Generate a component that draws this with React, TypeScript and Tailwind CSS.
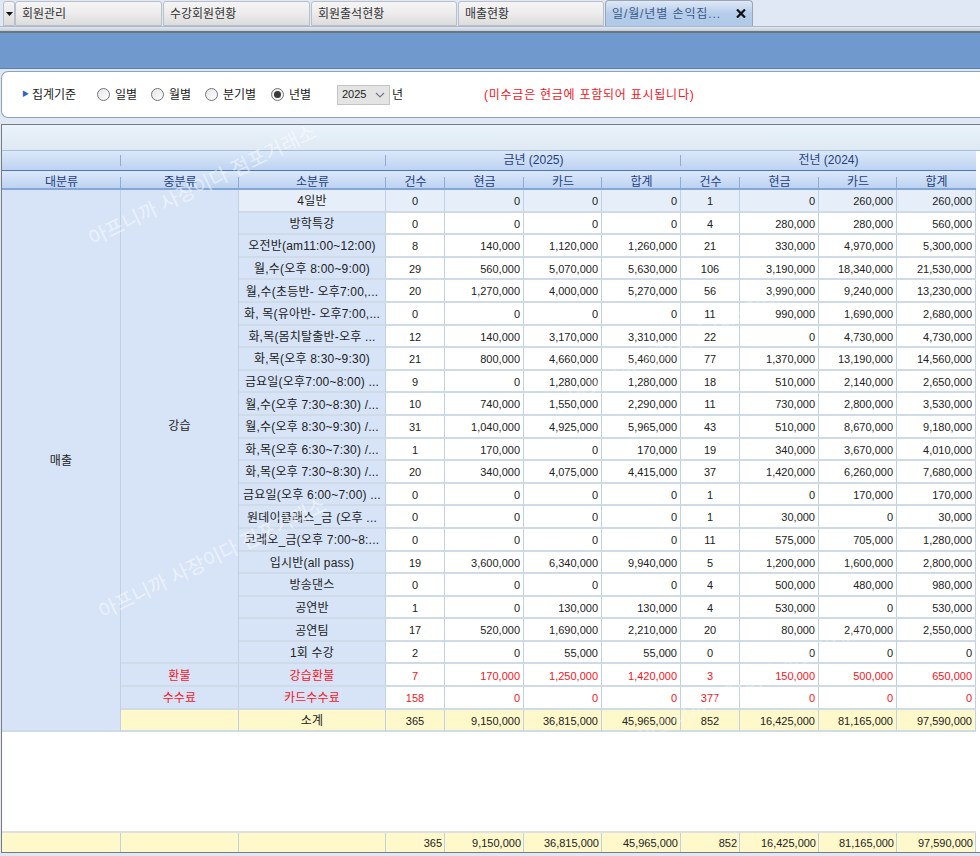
const rows: string[][] = [
  ["4일반", "0", "0", "0", "0", "1", "0", "260,000", "260,000"],
  ["방학특강", "0", "0", "0", "0", "4", "280,000", "280,000", "560,000"],
  ["오전반(am11:00~12:00)", "8", "140,000", "1,120,000", "1,260,000", "21", "330,000", "4,970,000", "5,300,000"],
  ["월,수(오후 8:00~9:00)", "29", "560,000", "5,070,000", "5,630,000", "106", "3,190,000", "18,340,000", "21,530,000"],
  ["월,수(초등반- 오후7:00,...", "20", "1,270,000", "4,000,000", "5,270,000", "56", "3,990,000", "9,240,000", "13,230,000"],
  ["화, 목(유아반- 오후7:00,...", "0", "0", "0", "0", "11", "990,000", "1,690,000", "2,680,000"],
  ["화,목(몸치탈출반-오후 ...", "12", "140,000", "3,170,000", "3,310,000", "22", "0", "4,730,000", "4,730,000"],
  ["화,목(오후 8:30~9:30)", "21", "800,000", "4,660,000", "5,460,000", "77", "1,370,000", "13,190,000", "14,560,000"],
  ["금요일(오후7:00~8:00) ...", "9", "0", "1,280,000", "1,280,000", "18", "510,000", "2,140,000", "2,650,000"],
  ["월,수(오후 7:30~8:30) /...", "10", "740,000", "1,550,000", "2,290,000", "11", "730,000", "2,800,000", "3,530,000"],
  ["월,수(오후 8:30~9:30) /...", "31", "1,040,000", "4,925,000", "5,965,000", "43", "510,000", "8,670,000", "9,180,000"],
  ["화,목(오후 6:30~7:30) /...", "1", "170,000", "0", "170,000", "19", "340,000", "3,670,000", "4,010,000"],
  ["화,목(오후 7:30~8:30) /...", "20", "340,000", "4,075,000", "4,415,000", "37", "1,420,000", "6,260,000", "7,680,000"],
  ["금요일(오후 6:00~7:00) ...", "0", "0", "0", "0", "1", "0", "170,000", "170,000"],
  ["원데이클래스_금 (오후 ...", "0", "0", "0", "0", "1", "30,000", "0", "30,000"],
  ["코레오_금(오후 7:00~8:...", "0", "0", "0", "0", "11", "575,000", "705,000", "1,280,000"],
  ["입시반(all pass)", "19", "3,600,000", "6,340,000", "9,940,000", "5", "1,200,000", "1,600,000", "2,800,000"],
  ["방송댄스", "0", "0", "0", "0", "4", "500,000", "480,000", "980,000"],
  ["공연반", "1", "0", "130,000", "130,000", "4", "530,000", "0", "530,000"],
  ["공연팀", "17", "520,000", "1,690,000", "2,210,000", "20", "80,000", "2,470,000", "2,550,000"],
  ["1회 수강", "2", "0", "55,000", "55,000", "0", "0", "0", "0"],
];
const refund = ["강습환불", "7", "170,000", "1,250,000", "1,420,000", "3", "150,000", "500,000", "650,000"];
const fee = ["카드수수료", "158", "0", "0", "0", "377", "0", "0", "0"];
const subtotal = ["소계", "365", "9,150,000", "36,815,000", "45,965,000", "852", "16,425,000", "81,165,000", "97,590,000"];

const cols = "grid grid-cols-[119px_118px_147px_59px_79px_78px_79px_59px_79px_78px_79px]";
const line = "pt-[2px] border-r border-b-2 border-r-[#bfd1e2] border-b-[#cfdce8]";

function Values({ cells, bg, text }: { cells: string[]; bg: string; text: string }) {
  return (
    <>
      {cells.slice(1).map((v, i) => (
        <div
          key={i}
          className={`${line} ${bg} ${text} flex items-center text-[11px] ${
            i === 0 || i === 4 ? "justify-center" : "justify-end pr-[3px]"
          }`}
        >
          {v}
        </div>
      ))}
    </>
  );
}

function Label({ children, className }: { children?: React.ReactNode; className: string }) {
  return (
    <div className={`${line} ${className} flex items-center justify-center whitespace-nowrap overflow-hidden tracking-[0.2px]`}>
      {children}
    </div>
  );
}

function Sep({ children, last }: { children?: React.ReactNode; last?: boolean }) {
  return (
    <div className="relative h-full flex items-center justify-center text-[#1f3f7d]">
      {children}
      {!last && <span className="absolute right-0 top-[4px] bottom-[3px] w-px bg-[#8fadd4]" />}
    </div>
  );
}

function Radio({ label, on, w }: { label: string; on?: boolean; w: string }) {
  return (
    <label className={`${w} flex items-center gap-[5px]`}>
      <span className="flex items-center justify-center w-[13px] h-[13px] rounded-full border border-[#70757a] bg-gradient-to-br from-[#e4e4e4] to-white">
        {on && <span className="w-[7px] h-[7px] rounded-full bg-[#3a3a3a]" />}
      </span>
      <span>{label}</span>
    </label>
  );
}

function Tab({ label, w }: { label: string; w: string }) {
  return (
    <div className={`${w} h-[25px] flex items-center pl-[6px] mr-px rounded-t-[3px] border border-[#b9c0c9] bg-gradient-to-b from-[#f5f5f5] via-[#ececec] to-[#dcdcdc] text-[#333] whitespace-nowrap`}>
      {label}
    </div>
  );
}

function Mark({ className }: { className: string }) {
  return (
    <div className={`absolute pointer-events-none whitespace-nowrap text-[20px] text-white origin-left rotate-[-26deg] ${className}`}>
      아프니까 사장이다 점포거래소
    </div>
  );
}

export default function App() {
  return (
    <div
      className="relative w-[980px] h-[856px] overflow-hidden flex flex-col bg-[#dfe8f4] text-[12px] text-[#222]"
      style={{ fontFamily: '"Liberation Sans","Noto Sans CJK KR",sans-serif' }}
    >
      {/* tab strip */}
      <div className="flex items-start h-[27px] pl-[3px] pt-px border-b border-b-[#aeb8c4]">
        <div className="w-[12px] h-[25px] flex items-center justify-center rounded-t-[3px] border border-[#b9c0c9] bg-gradient-to-b from-[#f5f5f5] to-[#dcdcdc]">
          <svg width="7" height="4" viewBox="0 0 7 4"><path d="M0 0h7L3.5 4z" fill="#111" /></svg>
        </div>
        <Tab label="회원관리" w="w-[147px]" />
        <Tab label="수강회원현황" w="w-[147px]" />
        <Tab label="회원출석현황" w="w-[146px]" />
        <Tab label="매출현황" w="w-[146px]" />
        <div className="w-[148px] h-[26px] -mt-px flex items-center pl-[6px] pr-[5px] justify-between rounded-t-[4px] border border-b-0 border-[#9aa6b4] bg-gradient-to-b from-[#dfe9f6] via-[#b5cdeb] to-[#b0c9e8] text-[#3d5a87] whitespace-nowrap">
          <span className="tracking-[0.9px]">일/월/년별 손익집...</span>
          <svg width="10" height="9" viewBox="0 0 10 9" className="mr-[1px]">
            <path d="M1 0.5l8 8M9 0.5l-8 8" stroke="#111" strokeWidth="2.2" />
          </svg>
        </div>
      </div>
      <div className="h-[4px] bg-gradient-to-b from-[#dfe8f4] to-[#c4ccd6]" />
      <div className="h-[2px] bg-[#6d7680]" />
      {/* blue band */}
      <div className="h-[36px] bg-[#7099cd] border-b border-b-[#5f7faa]" />
      <div className="h-[2px]" />
      {/* filter panel */}
      <div className="relative h-[47px] ml-px flex items-center rounded-l-[7px] border border-r-0 border-[#8ba3bd] bg-white pl-[20px]">
        <span className="text-[#2f5fd0] text-[7px] mr-[3px]">▶</span>
        <span className="w-[47px] whitespace-nowrap">집계기준</span>
        <div className="flex items-center ml-[18px]">
          <Radio label="일별" w="w-[54px]" />
          <Radio label="월별" w="w-[54px]" />
          <Radio label="분기별" w="w-[66px]" />
          <Radio label="년별" w="w-[66px]" on />
        </div>
        <div className="w-[53px] h-[20px] flex items-center justify-between pl-[4px] pr-[4px] border border-[#c4c4c4] bg-[#e4e4e4] text-[11px]">
          <span>2025</span>
          <svg width="10" height="6" viewBox="0 0 10 6"><path d="M1 1l4 4 4-4" fill="none" stroke="#778" strokeWidth="1.2" /></svg>
        </div>
        <span className="ml-[2px]">년</span>
        <span className="ml-[81px] text-[#f5141e] whitespace-nowrap tracking-[0.75px]">(미수금은 현금에 포함되어 표시됩니다)</span>
      </div>
      <div className="h-[6px]" />
      {/* grid frame */}
      <div className="relative ml-px h-[729px] flex flex-col border-l border-t border-b border-[#777c82] bg-white">
        <div className="h-[26px] bg-gradient-to-b from-[#eaf3fc] to-[#dfe9f2] border-b border-b-[#a4c0de]" />
        {/* headers */}
        <div className="w-[974px] bg-gradient-to-b from-[#dce8f9] to-[#bdd3f2] border-b border-b-[#4b77b7]">
          <div className={`${cols} h-[19px] pb-[2px]`}>
            <Sep />
            <div className="col-span-2"><Sep /></div>
            <div className="col-span-4"><Sep>금년 (2025)</Sep></div>
            <div className="col-span-4"><Sep last>전년 (2024)</Sep></div>
          </div>
        </div>
        <div className="w-[974px] bg-gradient-to-b from-[#dce8f9] to-[#bdd3f2] border-b-2 border-b-[#84a7d8]">
          <div className={`${cols} h-[17px] pt-[2px]`}>
            {["대분류", "중분류", "소분류", "건수", "현금", "카드", "합계", "건수", "현금", "카드", "합계"].map((h, i) => (
              <Sep key={i} last={i === 10}>{h}</Sep>
            ))}
          </div>
        </div>
        {/* body */}
        <div className={`${cols} w-[974px] grid-rows-[repeat(24,22.6px)] border-r border-r-[#bfd1e2]`}>
          <Label className="row-span-24 bg-[#d7e4f7]">매출</Label>
          <Label className="row-span-21 bg-[#d7e4f7] pb-[2px]">강습</Label>
          {rows.map((cells, i) => (
            <div key={i} className="contents">
              <Label className={i === 0 ? "bg-[#e6eff9]" : "bg-[#d7e4f7]"}>{cells[0]}</Label>
              <Values cells={cells} bg={i === 0 ? "bg-[#e6eff9]" : "bg-white"} text="text-[#222]" />
            </div>
          ))}
          <Label className="bg-[#d7e4f7] text-[#f5141e]">환불</Label>
          <Label className="bg-[#d7e4f7] text-[#f5141e]">{refund[0]}</Label>
          <Values cells={refund} bg="bg-white" text="text-[#f5141e]" />
          <Label className="bg-[#d7e4f7] text-[#f5141e]">수수료</Label>
          <Label className="bg-[#d7e4f7] text-[#f5141e]">{fee[0]}</Label>
          <Values cells={fee} bg="bg-white" text="text-[#f5141e]" />
          <Label className="bg-[#fef8ca]" />
          <Label className="bg-[#fef8ca]">{subtotal[0]}</Label>
          <Values cells={subtotal} bg="bg-[#fef8ca]" text="text-[#222]" />
        </div>
        <div className="flex-1" />
        {/* footer */}
        <div className={`${cols} w-[974px] h-[21px] border-t-2 border-t-[#dddfe0] bg-[#fef8ca]`}>
          {["", "", "", ...subtotal.slice(1)].map((v, i) => (
            <div key={i} className="flex items-center justify-end pr-[2px] pt-[2px] border-r border-r-[#bfd1e2] text-[11px]">
              {v}
            </div>
          ))}
        </div>
      </div>

      <Mark className="left-[90px] top-[225px] opacity-50" />
      <Mark className="left-[100px] top-[598px] opacity-50" />
      <Mark className="left-[570px] top-[382px] opacity-30" />
      <Mark className="left-[640px] top-[722px] opacity-30" />
    </div>
  );
}
